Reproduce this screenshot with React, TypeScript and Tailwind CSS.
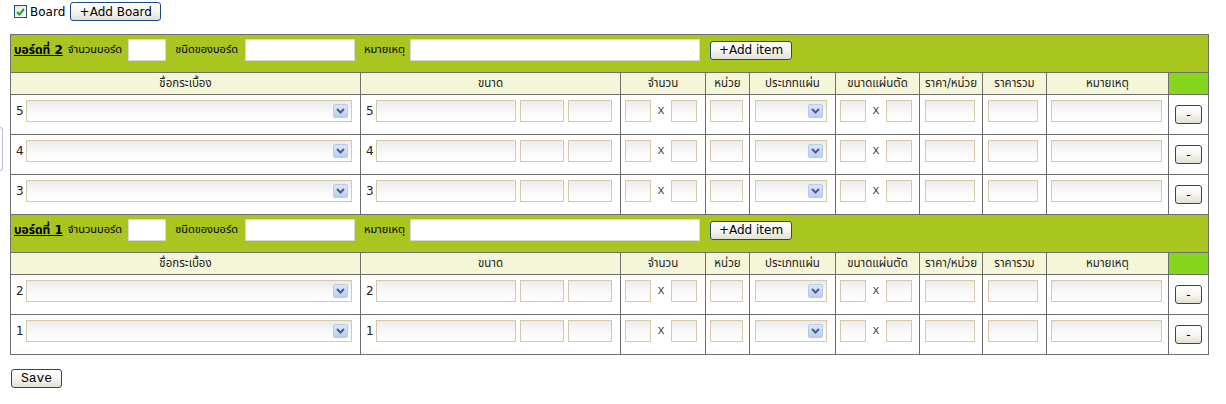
import React from "react";

const FONT = "font-['DejaVu_Sans','Noto_Sans_Thai','Noto_Sans_Thai_UI','Noto_Sans',sans-serif]";

function Inp({ cls }: { cls: string }) {
  return (
    <div
      className={`${cls} h-[22px] shrink-0 border border-[#d6c9a8] bg-linear-to-b from-[#ebebeb] via-[#f8f8f8] to-white`}
    />
  );
}

function Sel({ cls }: { cls: string }) {
  return (
    <div
      className={`${cls} h-[22px] shrink-0 border border-[#d6c9a8] bg-linear-to-b from-[#ebebeb] via-[#f8f8f8] to-white flex items-center justify-end pr-[3px]`}
    >
      <div className="w-[15px] h-[14px] rounded-[2px] border border-[#b7c9ee] bg-linear-to-b from-[#dde7fb] to-[#b9cdf3] flex items-center justify-center">
        <svg width="9" height="6" viewBox="0 0 9 6">
          <path d="M1 1 L4.5 4.5 L8 1" stroke="#4a5d86" strokeWidth="2" fill="none" />
        </svg>
      </div>
    </div>
  );
}

function Btn({ children, cls }: { children: React.ReactNode; cls: string }) {
  return (
    <button
      className={`${cls} h-[19px] rounded-[3px] border border-[#1d4a82] bg-linear-to-b from-white via-[#f6f5f0] to-[#e3e0d2] leading-none text-black flex items-center justify-center`}
    >
      {children}
    </button>
  );
}

const cell = "border border-[#6e6e6e] p-0";

function Cross() {
  return (
    <span className="w-[20px] text-center text-[11px] text-[#333] [font-family:'Liberation_Mono',monospace]">X</span>
  );
}

function DataRow({ n }: { n: number }) {
  return (
    <tr className="h-[40px]">
      <td className={`${cell} align-top pt-[5px]`}>
        <div className="flex items-center pl-[5px] gap-[3px] text-[12px] text-[#222]">
          <span className="w-[7px]">{n}</span>
          <Sel cls="w-[326px]" />
        </div>
      </td>
      <td className={`${cell} align-top pt-[5px]`}>
        <div className="flex items-center pl-[5px] text-[12px] text-[#222]">
          <span className="w-[10px]">{n}</span>
          <Inp cls="w-[140px]" />
          <Inp cls="w-[44px] ml-[4px]" />
          <Inp cls="w-[44px] ml-[4px]" />
        </div>
      </td>
      <td className={`${cell} align-top pt-[5px]`}>
        <div className="flex items-center pl-[4px]">
          <Inp cls="w-[26px]" />
          <Cross />
          <Inp cls="w-[26px]" />
        </div>
      </td>
      <td className={`${cell} align-top pt-[5px]`}>
        <div className="flex items-center pl-[4px]">
          <Inp cls="w-[33px]" />
        </div>
      </td>
      <td className={`${cell} align-top pt-[5px]`}>
        <div className="flex items-center pl-[5px]">
          <Sel cls="w-[72px]" />
        </div>
      </td>
      <td className={`${cell} align-top pt-[5px]`}>
        <div className="flex items-center pl-[4px]">
          <Inp cls="w-[26px]" />
          <Cross />
          <Inp cls="w-[26px]" />
        </div>
      </td>
      <td className={`${cell} align-top pt-[5px]`}>
        <div className="flex items-center pl-[5px]">
          <Inp cls="w-[50px]" />
        </div>
      </td>
      <td className={`${cell} align-top pt-[5px]`}>
        <div className="flex items-center pl-[5px]">
          <Inp cls="w-[50px]" />
        </div>
      </td>
      <td className={`${cell} align-top pt-[5px]`}>
        <div className="flex items-center pl-[4px]">
          <Inp cls="w-[111px]" />
        </div>
      </td>
      <td className={`${cell} align-middle`}>
        <div className="flex items-center pl-[6px]">
          <Btn cls="w-[27px] text-[12px]">-</Btn>
        </div>
      </td>
    </tr>
  );
}

const headers = [
  "ชื่อกระเบื้อง",
  "ขนาด",
  "จำนวน",
  "หน่วย",
  "ประเภทแผ่น",
  "ขนาดแผ่นตัด",
  "ราคา/หน่วย",
  "ราคารวม",
  "หมายเหตุ",
];

function Board({ n, rows }: { n: number; rows: number[] }) {
  return (
    <>
      <tr className="h-[38px]">
        <td colSpan={10} className={`${cell} bg-[#a9c51f] align-top pt-[4px]`}>
          <div className="flex items-center h-[22px] pl-[3px] text-[11px] text-black">
            <span className="font-bold underline text-[12px]">บอร์ดที่ {n}</span>
            <span className="ml-[5px]">จำนวนบอร์ด</span>
            <div className="ml-[6px] w-[38px] h-[22px] border border-[#d9d9cf] bg-white" />
            <span className="ml-[9px]">ชนิดของบอร์ด</span>
            <div className="ml-[7px] w-[110px] h-[22px] border border-[#d9d9cf] bg-white" />
            <span className="ml-[9px]">หมายเหตุ</span>
            <div className="ml-[5px] w-[290px] h-[22px] border border-[#d9d9cf] bg-white" />
            <Btn cls="ml-[10px] w-[82px] text-[12px]">+Add item</Btn>
          </div>
        </td>
      </tr>
      <tr className="h-[22px]">
        {headers.map((h) => (
          <td key={h} className={`${cell} bg-[#f5f5d7] text-center align-middle text-[11.5px] text-[#222]`}>
            {h}
          </td>
        ))}
        <td className={`${cell} bg-[#85d61c]`} />
      </tr>
      {rows.map((r) => (
        <DataRow key={r} n={r} />
      ))}
    </>
  );
}

export default function App() {
  return (
    <div className={`${FONT} relative w-[1226px] h-[404px] bg-white text-black overflow-hidden`}>
      <div className="absolute left-0 top-[127px] w-[3px] h-[44px] border border-l-0 border-[#b9bdd6] rounded-r-[3px] bg-white" />
      <div className="flex items-center pt-[2px] pl-[14px] h-[21px]">
        <div className="w-[13px] h-[13px] border border-[#1c5180] bg-linear-to-br from-[#e4e4e0] to-white flex items-center justify-center">
          <svg width="9" height="8" viewBox="0 0 9 8">
            <path d="M1 4 L3.5 6.5 L8 1" stroke="#21a121" strokeWidth="2" fill="none" />
          </svg>
        </div>
        <span className="ml-[3px] text-[12px]">Board</span>
        <Btn cls="ml-[5px] w-[91px] text-[12px]">+Add Board</Btn>
      </div>
      <table className="ml-[10px] mt-[13px] border-collapse table-fixed w-[1199px]">
        <colgroup>
          <col className="w-[350px]" />
          <col className="w-[260px]" />
          <col className="w-[85px]" />
          <col className="w-[44px]" />
          <col className="w-[86px]" />
          <col className="w-[84px]" />
          <col className="w-[63px]" />
          <col className="w-[64px]" />
          <col className="w-[122px]" />
          <col className="w-[40px]" />
        </colgroup>
        <tbody>
          <Board n={2} rows={[5, 4, 3]} />
          <Board n={1} rows={[2, 1]} />
        </tbody>
      </table>
      <div className="pl-[11px] mt-[14px]">
        <Btn cls="w-[51px] text-[13px] [font-family:'Liberation_Mono',monospace]">Save</Btn>
      </div>
    </div>
  );
}
